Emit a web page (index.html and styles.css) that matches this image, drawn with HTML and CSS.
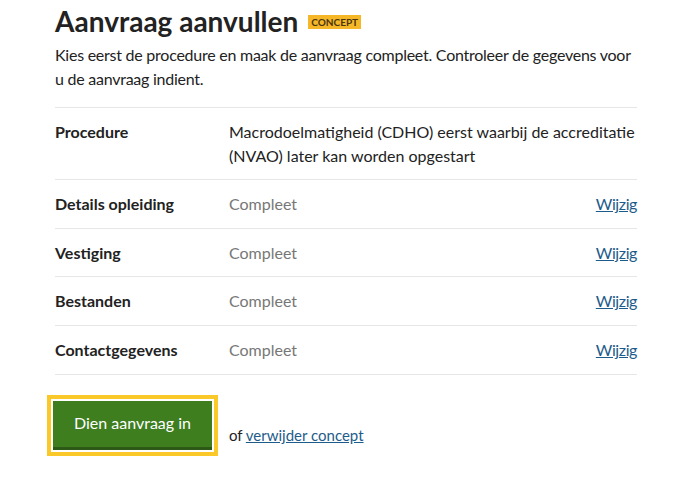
FILE: index.html
```html
<!DOCTYPE html>
<html lang="nl">
<head>
<meta charset="utf-8">
<title>Aanvraag aanvullen</title>
<link rel="stylesheet" href="styles.css">
</head>
<body>
<main class="page">
  <h1 class="title">Aanvraag aanvullen <span class="badge">CONCEPT</span></h1>
  <p class="intro">Kies eerst de procedure en maak de aanvraag compleet. Controleer de gegevens voor u de aanvraag indient.</p>
  <dl class="summary">
    <div class="row">
      <dt class="key">Procedure</dt>
      <dd class="value">Macrodoelmatigheid (CDHO) eerst waarbij de accreditatie (NVAO) later kan worden opgestart</dd>
      <dd class="action"></dd>
    </div>
    <div class="row">
      <dt class="key">Details opleiding</dt>
      <dd class="value muted">Compleet</dd>
      <dd class="action"><a href="#">Wijzig</a></dd>
    </div>
    <div class="row">
      <dt class="key">Vestiging</dt>
      <dd class="value muted">Compleet</dd>
      <dd class="action"><a href="#">Wijzig</a></dd>
    </div>
    <div class="row">
      <dt class="key">Bestanden</dt>
      <dd class="value muted">Compleet</dd>
      <dd class="action"><a href="#">Wijzig</a></dd>
    </div>
    <div class="row">
      <dt class="key">Contactgegevens</dt>
      <dd class="value muted">Compleet</dd>
      <dd class="action"><a href="#">Wijzig</a></dd>
    </div>
  </dl>
  <div class="actions">
    <button class="submit" type="button">Dien aanvraag in</button>
    <span class="alt">of <a href="#">verwijder concept</a></span>
  </div>
</main>
</body>
</html>
```
FILE: styles.css
```css
* { box-sizing: border-box; }
body {
  margin: 0;
  background: #fff;
  color: #222;
  font-family: "Lato", "Noto Sans", sans-serif;
}
.page {
  width: 582px;
  margin-left: 55px;
  padding-top: 3px;
}
.title {
  margin: 0;
  font-size: 28px;
  line-height: 36px;
  font-weight: 700;
  display: flex;
  align-items: center;
  gap: 10px;
}
.badge {
  background: #f5b728;
  color: #4a3510;
  font-size: 10px;
  line-height: 14px;
  padding: 0 3px;
  font-weight: 700;
  margin-top: 2px;
}
.intro {
  margin: 4px 0 0;
  font-size: 16px;
  letter-spacing: -0.25px;
  line-height: 24px;
  padding-bottom: 16px;
}
.summary {
  margin: 0;
  border-top: 1px solid #e6e6e6;
}
.row {
  display: grid;
  grid-template-columns: 174px 1fr auto;
  padding: 12px 0 11.7px;
  border-bottom: 1px solid #e6e6e6;
  font-size: 16px;
  line-height: 24px;
}
.row:first-child { padding-bottom: 11px; }
.key { font-weight: 700; margin: 0; }
.value { margin: 0; }
.muted { color: #777; }
.action { margin: 0; text-align: right; }
a { color: #1d5c8a; text-decoration: underline; }
.action a { letter-spacing: -0.4px; }
.actions {
  display: flex;
  align-items: flex-end;
  gap: 11px;
  margin-top: 20px;
  margin-left: -8px;
}
.submit {
  font-family: inherit;
  font-size: 16px;
  color: #fff;
  background: #3e7e1f;
  border: 0;
  border-bottom: 3px solid #2c5a16;
  width: 159px;
  height: 49px;
  padding: 0;
  outline: 4px solid #fbc82a;
  outline-offset: 2px;
  margin: 6px;
  padding-bottom: 2px;
}
.alt { font-size: 15px; line-height: 20px; padding-bottom: 11px; }
```
